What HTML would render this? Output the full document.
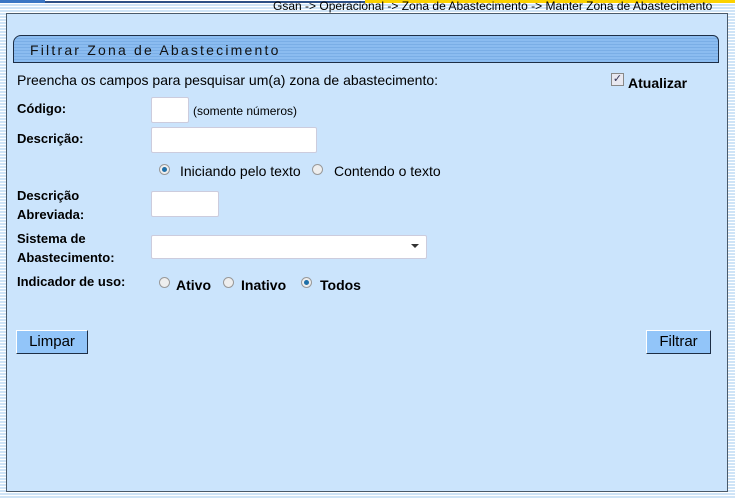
<!DOCTYPE html>
<html><head><meta charset="utf-8"><style>
body{margin:0;width:735px;height:499px;overflow:hidden;font-family:"Liberation Sans",Arial,sans-serif;font-size:13px;color:#000;
background:repeating-linear-gradient(to bottom,#fff 0,#fff 1px,#cfe4f7 1px,#cfe4f7 3px);position:relative}
.a{position:absolute}
.panel{left:6px;top:13px;width:720px;height:477px;background:#cbe4fc;border:1px solid #4a5a6a}
.title{left:13px;top:35px;width:706px;height:28px;border:1px solid #1d2e45;border-radius:8px 6px 0 0;
background:repeating-linear-gradient(to bottom,#8bbcf0 0,#8bbcf0 2px,#7aaee6 2px,#7aaee6 3px);font-size:14px;letter-spacing:2.2px;color:#111;line-height:28px;padding-left:16px;box-sizing:border-box}
b{font-weight:bold}
.inp{background:#fff;border:1px solid #ccd;border-radius:2px;height:24px}
.rad{width:9px;height:9px;border-radius:50%;border:1px solid #999;background:#eee}
.rad.on::after{content:"";position:absolute;left:2px;top:2px;width:5px;height:5px;border-radius:50%;background:#1f6fa8}
.btn{background:#92c5f9;border:1px solid #1d2e45;border-top-color:#fff;border-left-color:#fff;font-size:15px;line-height:22px;text-align:center;height:22px}
</style></head><body>
<div class="a" style="left:0;top:0;width:45px;height:3px;background:#3a76c4"></div>
<div class="a" style="left:45px;top:1px;width:690px;height:2px;background:#2c4f86"></div>
<div class="a" style="left:365px;top:0;width:370px;height:3px;background:#fcd200"></div>
<div class="a" style="left:273px;top:-1px;font-size:12px;width:460px">Gsan -&gt; Operacional -&gt; Zona de Abastecimento -&gt; Manter Zona de Abastecimento</div>
<div class="a panel"></div>
<div class="a title">Filtrar Zona de Abastecimento</div>
<div class="a" style="left:17px;top:72px;font-size:14px">Preencha os campos para pesquisar um(a) zona de abastecimento:</div>
<div class="a" style="left:611px;top:73px;width:11px;height:11px;border:1px solid #888;background:#e8e8f0;font-size:11px;line-height:11px;text-align:center;color:#335">✓</div>
<div class="a" style="left:628px;top:75px;font-size:14px"><b>Atualizar</b></div>
<div class="a" style="left:17px;top:101px"><b>Código:</b></div>
<div class="a inp" style="left:151px;top:97px;width:36px"></div>
<div class="a" style="left:193px;top:104px;font-size:12px">(somente números)</div>
<div class="a" style="left:17px;top:131px"><b>Descrição:</b></div>
<div class="a inp" style="left:151px;top:127px;width:164px"></div>
<div class="a rad on" style="left:159px;top:164px"></div>
<div class="a" style="left:180px;top:163px;font-size:14px">Iniciando pelo texto</div>
<div class="a rad" style="left:312px;top:164px"></div>
<div class="a" style="left:334px;top:163px;font-size:14px">Contendo o texto</div>
<div class="a" style="left:17px;top:186px;line-height:19px"><b>Descrição<br>Abreviada:</b></div>
<div class="a inp" style="left:151px;top:191px;width:66px"></div>
<div class="a" style="left:17px;top:229px;line-height:19px"><b>Sistema de<br>Abastecimento:</b></div>
<div class="a inp" style="left:151px;top:235px;width:274px;height:22px"></div>
<div class="a" style="left:411px;top:244px;width:0;height:0;border-left:4px solid transparent;border-right:4px solid transparent;border-top:4px solid #333"></div>
<div class="a" style="left:17px;top:274px"><b>Indicador de uso:</b></div>
<div class="a rad" style="left:159px;top:277px"></div>
<div class="a" style="left:176px;top:277px;font-size:14px"><b>Ativo</b></div>
<div class="a rad" style="left:223px;top:277px"></div>
<div class="a" style="left:241px;top:277px;font-size:14px"><b>Inativo</b></div>
<div class="a rad on" style="left:301px;top:277px"></div>
<div class="a" style="left:320px;top:277px;font-size:14px"><b>Todos</b></div>
<div class="a btn" style="left:16px;top:330px;width:70px">Limpar</div>
<div class="a btn" style="left:646px;top:330px;width:63px">Filtrar</div>
</body></html>
